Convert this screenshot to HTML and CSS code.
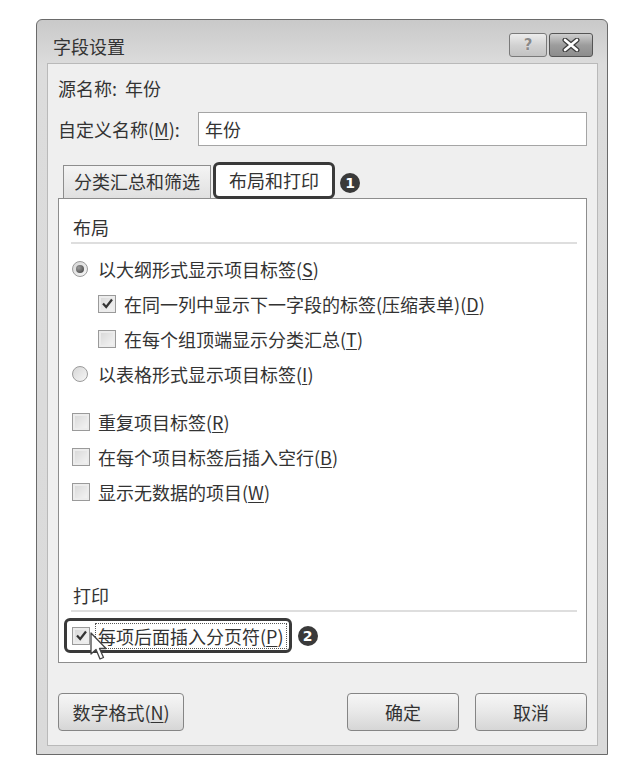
FILE: index.html
```html
<!DOCTYPE html>
<html lang="zh-CN">
<head>
    <meta charset="UTF-8">
    <meta name="viewport" content="width=device-width, initial-scale=1.0">
    <title>字段设置</title>
    <link rel="stylesheet" href="styles.css">
</head>
<body>
    <div class="dialog">
        <div class="titlebar">
            <span class="title">字段设置</span>
            <div class="caption-btns">
                <span class="cap-btn help">?</span>
                <span class="cap-btn close">
                    <svg width="20" height="14" viewBox="0 0 20 14">
                        <path d="M4 2 L16 12 M16 2 L4 12" stroke="#3c3c3c" stroke-width="5" stroke-linecap="round"/>
                        <path d="M4 2 L16 12 M16 2 L4 12" stroke="#ffffff" stroke-width="2.6" stroke-linecap="round"/>
                    </svg>
                </span>
            </div>
        </div>

        <div class="client">
            <div class="source-row">源名称:&nbsp; 年份</div>

            <div class="name-row">
                <label for="customName">自定义名称(<u>M</u>):</label>
                <div class="textbox" id="customName">年份</div>
            </div>

            <div class="tabs">
                <div class="tab">分类汇总和筛选</div>
                <div class="tab active">布局和打印</div>
                <span class="marker">1</span>
            </div>

            <div class="panel">
                <div class="group-title">布局</div>
                <div class="rule"></div>
                <div class="opt"><span class="radio on"></span>以大纲形式显示项目标签(<u>S</u>)</div>
                <div class="opt indent"><span class="check on"><svg width="15" height="15" viewBox="0 0 15 15"><path d="M3 7.5 L6.2 11 L12 3.5" fill="none" stroke="#333" stroke-width="2.2"/></svg></span>在同一列中显示下一字段的标签(压缩表单)(<u>D</u>)</div>
                <div class="opt indent"><span class="check"></span>在每个组顶端显示分类汇总(<u>T</u>)</div>
                <div class="opt"><span class="radio"></span>以表格形式显示项目标签(<u>I</u>)</div>

                <div class="opt spaced"><span class="check"></span>重复项目标签(<u>R</u>)</div>
                <div class="opt"><span class="check"></span>在每个项目标签后插入空行(<u>B</u>)</div>
                <div class="opt"><span class="check"></span>显示无数据的项目(<u>W</u>)</div>

                <div class="print-group">
                    <div class="group-title">打印</div>
                    <div class="rule"></div>
                    <div class="opt-wrap">
                        <div class="opt highlight">
                            <span class="check on"><svg width="15" height="15" viewBox="0 0 15 15"><path d="M3 7.5 L6.2 11 L12 3.5" fill="none" stroke="#333" stroke-width="2.2"/></svg></span>
                            <span class="focus">每项后面插入分页符(<u>P</u>)</span>
                            <svg class="cursor" width="18" height="30" viewBox="0 0 18 30">
                                <path d="M1 1 L1 22 L6 17.5 L10 27 L13.5 25.5 L9.5 16.5 L16 16.5 Z" fill="#fff" stroke="#444" stroke-width="1.3" stroke-linejoin="round"/>
                            </svg>
                        </div>
                        <span class="marker">2</span>
                    </div>
                </div>
            </div>

            <div class="buttons">
                <button class="btn wide">数字格式(<u>N</u>)</button>
                <span class="spacer"></span>
                <button class="btn">确定</button>
                <button class="btn">取消</button>
            </div>
        </div>
    </div>
</body>
</html>
```

FILE: styles.css
```css
body {
    margin: 0;
    background: #ffffff;
    font-family: "Noto Sans CJK SC", "Noto Sans", sans-serif;
    font-size: 18px;
    color: #333333;
}
u {
    text-decoration-thickness: 1px;
    text-underline-offset: 2px;
}
.dialog {
    box-sizing: border-box;
    width: 572px;
    height: 736px;
    margin: 19px 0 0 36px;
    padding: 0 9px 8px 10px;
    border: 1px solid #6a6a6a;
    border-radius: 6px 6px 0 0;
    background: linear-gradient(#c9c9c9, #dcdcdc 45px, #dadada);
    display: flex;
    flex-direction: column;
}
.titlebar {
    height: 43px;
    display: flex;
    align-items: flex-start;
    padding-left: 6px;
}
.title {
    margin-top: 14px;
    line-height: 24px;
}
.caption-btns {
    margin-left: auto;
    margin-top: 13px;
    margin-right: 5px;
    display: flex;
    gap: 2px;
}
.cap-btn {
    box-sizing: border-box;
    height: 24px;
    display: flex;
    align-items: center;
    justify-content: center;
    border: 1px solid #7a7a7a;
    border-radius: 3px;
}
.help {
    width: 38px;
    background: linear-gradient(#ededed, #d2d2d2 50%, #c2c2c2);
    color: #8a8a8a;
    font-family: "DejaVu Sans", sans-serif;
    font-weight: bold;
    font-size: 15px;
    text-shadow: 0 0 1px #fff;
}
.close {
    width: 44px;
    background: linear-gradient(#cfcfcf, #9d9d9d 50%, #8c8c8c);
    border-color: #555555;
}
.client {
    flex: 1;
    background: #efefef;
    border: 1px solid #b9b9b9;
    padding: 11px 10px 14px 10px;
    display: flex;
    flex-direction: column;
}
.source-row {
    line-height: 26px;
}
.name-row {
    display: flex;
    align-items: center;
    margin-top: 11px;
}
.name-row label {
    width: 140px;
}
.textbox {
    box-sizing: border-box;
    flex: 1;
    height: 34px;
    padding: 2px 6px;
    line-height: 28px;
    background: #ffffff;
    border: 1px solid #a5a5a5;
}
.tabs {
    display: flex;
    align-items: flex-end;
    height: 36px;
    margin-top: 16px;
    padding-left: 5px;
    position: relative;
    z-index: 1;
}
.tab {
    box-sizing: border-box;
    height: 33px;
    padding: 0 10px;
    line-height: 31px;
    background: linear-gradient(#f4f4f4, #e0e0e0);
    border: 1px solid #8d8d8d;
    border-bottom: none;
    margin-right: 2px;
}
.tab.active {
    height: 37px;
    margin-bottom: -1px;
    padding: 0 13px;
    line-height: 31px;
    background: #ffffff;
    border: 3px solid #3a3a3a;
    border-radius: 6px;
}
.marker {
    width: 20px;
    height: 20px;
    border-radius: 50%;
    background: #3a3a3a;
    color: #ffffff;
    font-family: "DejaVu Sans", sans-serif;
    font-weight: bold;
    font-size: 14px;
    line-height: 20px;
    text-align: center;
    flex: none;
}
.tabs .marker {
    align-self: center;
    margin: 6px 0 0 3px;
}
.panel {
    box-sizing: border-box;
    width: 529px;
    height: 465px;
    background: #ffffff;
    border: 1px solid #8d8d8d;
    padding: 15px 9px 9px 13px;
    display: flex;
    flex-direction: column;
}
.group-title {
    line-height: 26px;
    padding-left: 1px;
}
.rule {
    height: 2px;
    background: #dedede;
    margin: 2px 0 7px -1px;
}
.opt {
    display: flex;
    align-items: center;
    height: 35px;
    white-space: nowrap;
}
.opt.indent {
    padding-left: 26px;
}
.opt.spaced {
    margin-top: 13px;
}
.radio, .check {
    box-sizing: border-box;
    flex: none;
    display: flex;
    align-items: center;
    justify-content: center;
    border: 1px solid #9a9a9a;
    background: linear-gradient(135deg, #d6d6d6, #f6f6f6);
}
.radio {
    width: 16px;
    height: 16px;
    border-radius: 50%;
    margin-right: 10px;
}
.radio.on::after {
    content: "";
    width: 8px;
    height: 8px;
    border-radius: 50%;
    background: radial-gradient(circle at 35% 35%, #9a9a9a, #3c3c3c);
}
.check {
    width: 18px;
    height: 18px;
    margin-right: 8px;
    box-shadow: inset 0 0 0 2px #ececec;
}
.print-group {
    margin-top: auto;
}
.print-group .rule {
    margin-bottom: 6px;
}
.opt-wrap {
    display: flex;
    align-items: center;
}
.opt.highlight {
    box-sizing: border-box;
    position: relative;
    height: 35px;
    margin-left: -8px;
    padding: 0 2px 0 5px;
    border: 3px solid #3a3a3a;
    border-radius: 6px;
}
.opt.highlight .check {
    margin-right: 5px;
}
.focus {
    border: 1px dotted #555555;
    padding: 0 2px;
    line-height: 24px;
}
.cursor {
    position: absolute;
    left: 23px;
    top: 11px;
}
.opt-wrap .marker {
    margin-left: 6px;
}
.buttons {
    display: flex;
    margin-top: auto;
    gap: 16px;
}
.spacer {
    flex: 1;
}
.btn {
    box-sizing: border-box;
    width: 112px;
    height: 38px;
    font-family: inherit;
    font-size: 18px;
    color: #333333;
    background: linear-gradient(#f6f6f6, #e8e8e8 50%, #d6d6d6);
    border: 1px solid #858585;
    border-radius: 4px;
    padding: 0;
}
.btn.wide {
    width: 126px;
}
```
